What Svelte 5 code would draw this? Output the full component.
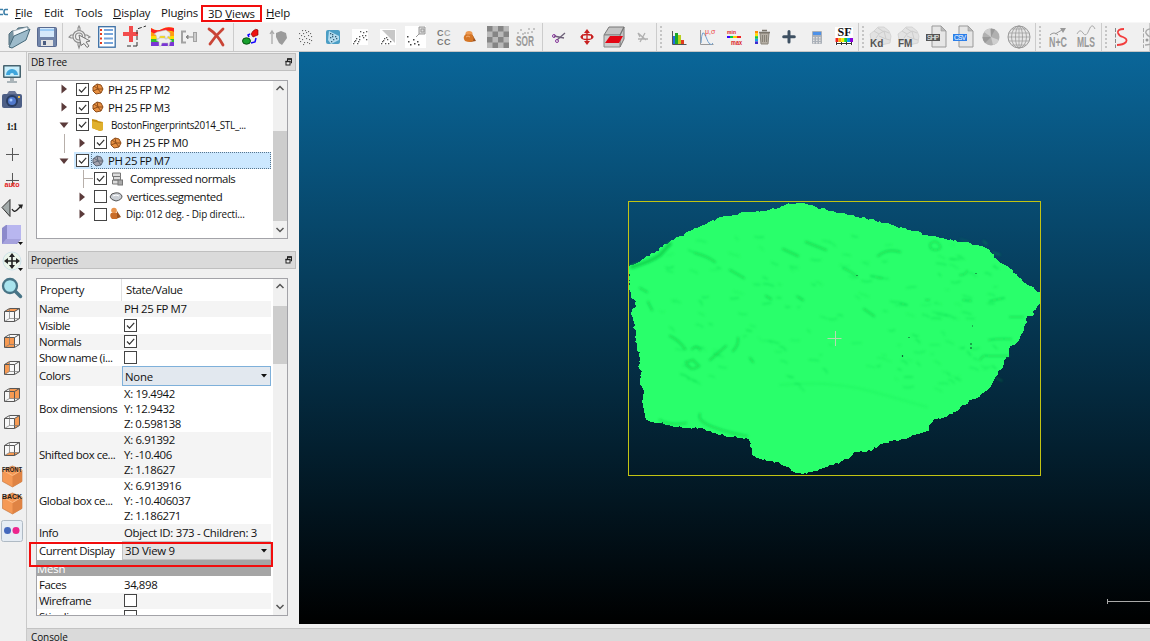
<script>
  const dots = (pts, c = '#666', r = 1.1) =>
    pts.map(([x, y]) => `<rect x="${x}" y="${y}" width="${r}" height="${r}" fill="${c}"/>`).join('');
  const hues = ['#3b2bd0', '#19a0e8', '#18c83a', '#ffe000', '#ff8a00', '#f01818'];
  const T = (s, x, y, size, fill, extra = '') =>
    `<text x="${x}" y="${y}" font-size="${size}" fill="${fill}" ${extra}>${s}</text>`;
  const narrow = (n) => `font-weight="bold" textLength="${n}" lengthAdjust="spacingAndGlyphs"`;
  const cloud = `<path d="M5 17 4 11 8 8 12 4 18 4 23 8 25 13 24 20 15 22Z" fill="#e2e2e2" stroke="#ccc" stroke-width=".7"/><path d="M8 8l5 3 5-3 5 2M13 11l-3 4M18 8l2 8 4 1M12 5l6 4M20 16l-7-3" fill="none" stroke="#cdcdcd"/>`;
  const page = `<path d="M10 3h9l5 5v16H10z" fill="#e6e6e6" stroke="#999"/><path d="M19 3v5h5z" fill="#bbb" stroke="#999" stroke-width=".6"/>`;

  const icons = {
    open: `<path d="M4 22V11l3-3h4l2-3 10-1v5" fill="#7895a4" stroke="#526e7d"/><path d="M8 8l14-4 2 4-15 12z" fill="#f5f8fa" stroke="#8195a1" stroke-width=".6"/><path d="M4 24 9 13l16-7-4 11-14 8z" fill="#9dbbcb" stroke="#456879"/>`,
    save: `<rect x="4.500" y="4.500" width="19" height="19" rx="1" fill="#7185aa" stroke="#58698f"/><rect x="7" y="5" width="14" height="9" fill="#d5e9fb"/><path d="M7 6h14v2H7z" fill="#9ccbf5"/><rect x="8" y="17" width="12" height="6" fill="#e4e4e4"/><rect x="10" y="18" width="3" height="4" fill="#4c5d80"/>`,
    pick: `<g fill="#eee" stroke="#8c8c8c" stroke-width="1.100"><path d="M12 8V5l1-2 1 2v3M12 19v3l1 3 1-3v-3M8 12H5l-2 2 2 1h3M18 12h3l3 2-2 1"/><circle cx="13" cy="13.500" r="6"/><circle cx="13" cy="13.500" r="3.500"/></g><path d="M13 12l11 6-4 1 3 4-2 1.500-3-4-3 2z" fill="#eee" stroke="#777"/>`,
    list: `<rect x="5.700" y="3.700" width="16.500" height="20.500" fill="#fff" stroke="#3a6ea5" stroke-width="1.300"/><path d="M11 7h9M11 11h9M11 15.500h9M11 20h9" stroke="#78a6dc" stroke-width="2"/><path d="M7 7h2M7 11h2M7 15.500h2M7 20h2" stroke="#e33b1e" stroke-width="2"/>`,
    align: `<path d="M11 3v16M3 11h15" stroke="#f24c4c" stroke-width="4"/><path d="M17 23V6l9-3M17 23H5" fill="none" stroke="#333" stroke-dasharray="4 2"/>`,
    sheep: `<path d="M3 8V5q6 4 11 1t12-1v18H3z" fill="#ffdf00"/><path d="M3 5q6 4 11 1t12-1v4q-7-3-12 1T3 9z" fill="#f22"/><path d="M3 9q6 4 11 1t12-1v4H3z" fill="#ff9b13"/><path d="M3 16h23v3H3z" fill="#33bd36"/><path d="M3 19h23v4H3z" fill="#7a35d5"/><path d="M6 11l3-2 9-2 4 3v4l-2-1-1 3h-2v-3h-5l-1 3H9l-1-4zM8 17l3-2h9l4 3-2 1-1 4h-1v-3h-6l-1 3h-2v-4z" fill="#f0f0ee" stroke="#bbb" stroke-width=".5"/>`,
    merge: `<path d="M11 8.500H7v11h4" fill="none" stroke="#a2a2a2" stroke-width="2"/><rect x="18.500" y="9.500" width="3" height="9" fill="#ccc" stroke="#a2a2a2"/><path d="M18 14h-7m0 0 2-2v4z" fill="#888" stroke="#888"/>`,
    cross: `<path d="M7 6Q15 11 21 22M21 6Q13 13 8 21" fill="none" stroke="#ca4537" stroke-width="2.800" stroke-linecap="round"/>`,
    worm: `<path d="M17 8q3-3 5-1v5l-5 2-2-3z" fill="#e11" stroke="#700" stroke-width=".6"/><ellipse cx="10.500" cy="18" rx="4" ry="3.200" fill="#18a02d" stroke="#055311"/><path d="M14 11l-2 1 1 2M15 20l4-1 1-4" fill="none" stroke="#10f" stroke-width="1.500"/>`,
    lift: `<path d="M8 21V9m-2 2 2-3 2 3" fill="none" stroke="#aaa" stroke-width="1.300"/><path d="M12 10l5-2 5 2 1 5-5 7-3-2-3-6z" fill="#9b9b9b"/>`,
    points: dots([[11,7],[14,7],[17,8],[8,10],[12,10],[15,9],[19,10],[10,12],[13,13],[17,12],[20,13],[8,15],[11,16],[15,15],[18,16],[20,17],[9,18],[13,19],[16,19],[18,20],[12,21]]),
    cube: `<rect x="7" y="7" width="14" height="14" rx="2" fill="#4b9ec5"/><path d="M10 8l10 5v4l-8 4-3-4z" fill="#b5dcef"/>${dots([[11,10],[13,11],[16,13],[11,14],[14,16],[17,15],[12,18],[13,13]], '#315c73', 1.3)}`,
    sub1: `<rect x="6" y="6" width="16" height="16" fill="#fff"/>${dots([[7,20],[9,17],[11,20],[10,15],[13,16],[13,13],[16,12],[17,9],[20,8],[19,12],[14,8],[20,16],[8,18],[12,18],[17,14]], '#555', 1.3)}`,
    sub2: `<rect x="6" y="6" width="16" height="16" fill="#fff"/><path d="M8 7h13v13z" fill="#c7c7c7"/>${dots([[7,20],[9,17],[11,20],[10,15],[13,16],[8,18],[14,20],[12,14],[16,18]], '#555', 1.3)}`,
    sub3: `<rect x="4" y="3" width="21" height="22" fill="#fff"/><path d="M15 14l5-5" stroke="#999"/><path d="M18 4h6v7h-6zM20 6h3v3h-3z" fill="#ddd" stroke="#999"/>${dots([[6,13],[7,18],[12,16],[13,20],[16,18],[9,21],[17,21]], '#444', 1.5)}`,
    cccc: T('C',8,13,9,'#777','font-weight="bold"') + T('C',15,13,9,'#aaa','font-weight="bold"') + T('C',8,22,9,'#777','font-weight="bold"') + T('C',15,22,9,'#777','font-weight="bold"'),
    primitive: `<path d="M16 11l4 7-6 1z" fill="#9b511d"/><ellipse cx="13" cy="10.500" rx="3.500" ry="2.500" fill="#ed9b54"/><path d="M10 11q-4 3-1 7 5 2 8 0 2-5-2-7-3 1-5 0z" fill="#d57626"/><path d="M10 14q2-2 4 0" stroke="#f3b077" fill="none"/>`,
    checker: `<path d="M3 3h22v22H3z" fill="#b9b9b9"/>` + [0,1,2,3].flatMap(y => [0,1,2,3].filter(x => (x+y)%2===0).map(x => `<rect x="${3+x*5.5}" y="${3+y*5.5}" width="5.500" height="5.500" fill="#858585"/>`)).join(''),
    sor: T('SOR',5,22.5,14,'#999',narrow(18)) + dots([[6,9],[9,6],[13,9],[17,5],[20,8],[22,5],[11,10],[16,9]], '#c4c4c4', 2),
    scissors: `<path d="M9 13l10 2M12 17l8-7" stroke="#6d6078" stroke-width="1.300"/><circle cx="9" cy="13" r="1.500" fill="none" stroke="#87389b"/><circle cx="12" cy="18" r="1.500" fill="none" stroke="#87389b"/>`,
    move: `<g stroke="#c82020" fill="none" stroke-width="1.300"><path d="M14 9v11"/><ellipse cx="14" cy="14" rx="5.500" ry="2.500"/></g><path d="M14 6l3 4h-6zM14 22l3-4h-6zM7 14l3-3v5zM21 14l-3-3v5z" fill="#c82020"/>`,
    section: `<path d="M4 12l5-8h15l-4 8zM20 12l4-8v12l-4 8z" fill="#c4c4c4" stroke="#777"/><path d="M4 12h16v12H4z" fill="#ccc" stroke="#888"/><path d="M5 20l5-7h13l-4 7z" fill="#e30614"/>`,
    axis: `<path d="M10 10l8 7m-8-7 2 4m0 5 5-9m-7 6h10" fill="none" stroke="#b0b0b0" stroke-width="1.300"/>`,
    hist: `<path d="M7.500 8v13.500h14" fill="none" stroke="#555"/><path d="M8 13h2v8H8z" fill="#216ee5"/><path d="M10 10h3v11h-3z" fill="#1ba829"/><path d="M13 12h3v9h-3z" fill="#b9cf20"/><path d="M16 17h3v4h-3z" fill="#e23c20"/>`,
    stats: `<path d="M7.500 7v14.500h13" fill="none" stroke="#999"/><path d="M8 20Q9 3 13 14t7 6" fill="none" stroke="#73a3d2"/>${T('μ,σ',12,11,7,'#e44')}`,
    minmax: T('min',7,10.500,6,'#dc2424',narrow(9)) + T('max',11,21.500,6.5,'#dc2424',narrow(11)) + `<path d="M7 14h3" stroke="#30f" stroke-width="2"/><path d="M10 14h3" stroke="#0c4" stroke-width="2"/><path d="M13 14h4" stroke="#fc0" stroke-width="2"/><path d="M17 14h4" stroke="#e22" stroke-width="2"/>`,
    trash: hues.slice(0,5).reverse().map((c,i)=>`<rect x="7" y="${8+i*2.6}" width="3" height="2.600" fill="${c}"/>`).join('') + `<path d="M12 10h9l-1 11h-7z" fill="#b4aea4" stroke="#8a857b"/><path d="M11 9.500h11M14 7.500h5" stroke="#7b766d" stroke-width="1.500"/><path d="M14.500 12v7M16.500 12v7M18.500 12v7" stroke="#7b766d" stroke-width=".8"/>`,
    plus: `<path d="M14 8.500v10.500M8.700 13.700h10.600" stroke="#3e5062" stroke-width="3" stroke-linecap="round"/>`,
    calc: `<rect x="9" y="8" width="10" height="13" rx="1" fill="#aab0b8"/><rect x="10" y="9" width="8" height="3" fill="#4d91e8"/>${dots([[10,14],[13,14],[16,14],[10,16.5],[13,16.5],[16,16.5],[10,19],[13,19],[16,19]],'#e2e2e2',1.5)}`,
    sf: `<path d="M5 4h18v18H5z" fill="#fff"/>${T('SF',7.500,13,12,'#111','class="serif" font-weight="bold"')}` + ['#e22','#fa0','#ee0','#2c3','#09f','#80d'].map((c,i)=>`<rect x="${5.5+i*2.9}" y="15" width="3" height="4" fill="${c}"/>`).join('') + `<path d="M6 20.500h16M6.500 19v3M11.500 19v3M16.500 19v3M21.500 19v3" stroke="#333"/>`,
    kd: cloud + T('Kd',4,23.5,10,'#555','font-weight="bold"'),
    fm: cloud + T('FM',4,23.5,10,'#555','font-weight="bold"'),
    shp: page + `<rect x="4" y="11" width="14" height="7" fill="#555"/>${T('SHP',5,17,6.5,'#fff','textLength="12"')}`,
    csv: page + `<rect x="4" y="11" width="14" height="7" fill="#2c7fe9"/>${T('CSV',5,17,6.5,'#fff','textLength="12"')}`,
    disc: `<circle cx="14" cy="14" r="8.500" fill="#b0b0b0"/><path d="M14 14l-7-5a8.500 8.500 0 0 1 6-3.500zM14 14l8 3a8.500 8.500 0 0 1-6 5z" fill="#cfcfcf"/><path d="M14 14l-6 6a8 8 0 0 1-2.500-6zM14 14V5.500l4 1z" fill="#999"/>`,
    globe: `<circle cx="14" cy="14" r="11" fill="#e6e6e6" stroke="#999"/><path d="M3 14h22M4 10h20M4 18h20M7 6h14M7 22h14M14 3v22" stroke="#999" stroke-width=".7"/><g fill="none" stroke="#999" stroke-width=".8"><ellipse cx="14" cy="14" rx="3.500" ry="11"/><ellipse cx="14" cy="14" rx="7.500" ry="11"/></g>`,
    nc: T('N+C',5,23.5,14,'#999',narrow(18)) + `<path d="M6 12q4-4 8 0M11 11l7-4" fill="none" stroke="#999"/><path d="M16 5h6l-3 5z" fill="#999"/>`,
    mls: T('MLS',5,23.5,14,'#999',narrow(18)) + `<path d="M5 11q3-6 6-1t6-3 6-1" fill="none" stroke="#aaa"/>`,
    curve: `<path d="M8.500 5v20" stroke="#888" stroke-dasharray="4 1.500"/><path d="M17 6q-7 0-6 4 1 3 5 4 5 2 3 5-3 3-9 3" fill="none" stroke="#f23d3d" stroke-width="1.800"/>`,
    curve2: `<path d="M8.500 5v20" stroke="#aaa" stroke-dasharray="4 1.500"/><path d="M17 6q-7 0-6 4 1 3 5 4 5 2 3 5-3 3-9 3" fill="none" stroke="#aaa" stroke-width="1.500"/><circle cx="12" cy="17" r="1.500" fill="#999"/>`
  };

  const groups = [
    { cls: 'g1', items: ['open', 'save'] },
    { cls: 'g2', items: ['pick', 'list', 'align', 'sheep', 'merge', 'cross'] },
    { cls: 'g3', items: ['worm', 'lift', 'points', 'cube', 'sub1', 'sub2', 'sub3', 'cccc', 'primitive', 'checker', 'sor'] },
    { cls: 'g4', items: ['scissors', 'move', 'section', 'axis'] },
    { cls: 'g5 grip', items: ['hist', 'stats', 'minmax', 'trash', 'plus', 'calc', 'sf'] },
    { cls: 'g6 grip', items: ['kd', 'fm', 'shp', 'csv', 'disc', 'globe'] },
    { cls: 'g7 grip', items: ['nc', 'mls'] },
    { cls: 'g8 grip', items: ['curve', 'curve2'] }
  ];

  const wire = (face) =>
    `<path d="M5 9.500l4.500-3h10v10.500l-4.500 2.500H5z" fill="#f8f8f8"/>${face}<path d="M4.500 9.500h10v10h-10zM9.500 6.500H19.500v10l-5 3M4.500 9.500l5-3M14.500 9.500l5-3" fill="none" stroke="#555"/><path d="M9.500 7v9.500h10M9.500 16.500l-5 3" fill="none" stroke="#777" stroke-width=".7"/>`;
  const F = (d) => `<path d="${d}" fill="#f79a52"/>`;
  const box = (s) =>
    `<path d="M2.500 7l10-4 9.500 4v11.500l-9.500 5.500-10-5.500z" fill="#f59955" stroke="#bd6f36" stroke-width=".6"/><path d="M12.500 12.500v11.500l9.500-5.500V7z" fill="#df8344"/><path d="M2.500 7l10 5.500L22 7" fill="none" stroke="#ffbc86"/>${T(s,2,9.5,7.500,'#222',narrow(20))}`;
  const side = [
    `<rect x="3" y="5" width="18" height="13" rx="1" fill="#47636f"/><rect x="4.500" y="6.500" width="15" height="10" fill="#c9eefb"/><path d="M6 15a6 6 0 0 1 12 0h-4a2 2 0 0 0-4 0z" fill="#3ea5dc"/><path d="M10 18h4v3h3v2H7v-2h3z" fill="#aab4b9"/>`,
    `<rect x="2" y="8" width="20" height="14" rx="2" fill="#4d5f86"/><path d="M7 8l2-3h6l2 3z" fill="#6b7797"/><circle cx="12" cy="15" r="6" fill="#293c60"/><circle cx="12" cy="15" r="4" fill="#5179cc"/><circle cx="11" cy="14" r="1.500" fill="#a5caff"/><rect x="18" y="10" width="2" height="2" fill="#f3c14c"/>`,
    T('1:1',6.5,17,9.500,'#111','class="serif" font-weight="bold" textLength="11"'),
    `<path d="M12.500 8v13M6 14.500h13" stroke="#555"/>`,
    `<path d="M12.500 6v13M6 13.500h13" stroke="#555"/>${T('auto',4.5,20,7.500,'#e32222',narrow(15))}`,
    `<path d="M2 13.500l8-8v17z" fill="#a2aaaa" stroke="#333"/><path d="M12 15q2 4 5 1t4-4" fill="none" stroke="#222" stroke-width="1.300"/><path d="M18 10.500h5l-1.500 4.500z" fill="#222"/>`,
    `<path d="M2 7l4-3h15v14l-4 5H2z" fill="#8c8acb"/><path d="M7 4h14v14H7z" fill="#b8b6ef"/><path d="M6 18l-4 5h14l5-5z" fill="#a5a2dd"/><path d="M18 21h5l-2.500 3z" fill="#111"/>`,
    `<circle cx="12" cy="13" r="9" fill="#eaf4ea" stroke="#cde0e8"/><path d="M12 7v12M6 13h12" stroke="#222" stroke-width="1.600"/><path d="M12 5l3 4H9zM12 21l3-4H9zM4 13l4-3v6zM20 13l-4-3v6z" fill="#222"/><path d="M18 20h5l-2.500 3z" fill="#111"/>`,
    `<circle cx="10" cy="11" r="7" fill="#a9e4ee" stroke="#487486" stroke-width="2.300"/><path d="M15.500 16.500l5 5" stroke="#487486" stroke-width="3.500" stroke-linecap="round"/>`,
    wire(F('M5 9.500l4.500-3h10l-4.500 3z')),
    wire(F('M5 9.500h10v10H5z')),
    wire(F('M5 9.500l4.500-3v10L5 19.500z')),
    wire(F('M9.500 6.500h10v10h-10z')),
    wire(F('M15 9.500l4.500-3v10l-4.500 3z')),
    wire(F('M5 19.500l4.500-3h10l-4.500 3z')),
    box('FRONT'),
    box('BACK'),
    `<rect x="1.500" y="3.500" width="21" height="21" rx="2" fill="#e6edf4" stroke="#afbac4"/><circle cx="7.500" cy="13.500" r="3.500" fill="#4469bd"/><circle cx="16" cy="13.500" r="3.500" fill="#ec258e"/>`
  ];

  const treeIcons = {
    mesh: `<path d="M2 5l4-3 4 1 2 4-2 4-5 1-3-3z" fill="#e79042" stroke="#8e4d19"/><path d="M6 2l1 5 5 0M7 7l3 4M7 7l-5 2M7 7l-4-3" stroke="#8e4d19" fill="none"/>`,
    meshSel: `<path d="M2 5l4-3 4 1 2 4-2 4-5 1-3-3z" fill="#a5a3ad" stroke="#5d6878"/><path d="M6 2l1 5 5 0M7 7l3 4M7 7l-5 2M7 7l-4-3" stroke="#5d6878" fill="none"/>`,
    folder: `<path d="M1 1l5 1 1 1 5 1v8L9 13 1 10z" fill="#c58d12"/><path d="M1 3l8 2 3-1v8l-3 1-8-3z" fill="#e0b02c"/>`,
    normals: `<path d="M2.500 1h8v3.500h-8zM3.500 4.500h7V8h-7zM2.500 8h6v4h-6z" fill="#ddd" stroke="#777"/><rect x="8" y="8" width="4.500" height="5" fill="#aaa" stroke="#777"/>`,
    vertices: `<path d="M1 7q1-4 5-4 5-1 7 3 0 4-6 5-5-1-6-4z" fill="#c9ced4" stroke="#555"/><path d="M4 6l3-1 3 1" stroke="#fff" fill="none"/>`,
    plane: `<path d="M8 4l4 6-5 2z" fill="#9b511d"/><circle cx="5" cy="3.500" r="2.800" fill="#e8934c"/><path d="M2 6h6v6H3q-3-3-1-6z" fill="#c96d2a"/>`
  };
  const tree = [
    { d: 1, arrow: 'r', on: true, icon: 'mesh', t: 'PH 25 FP M2' },
    { d: 1, arrow: 'r', on: true, icon: 'mesh', t: 'PH 25 FP M3' },
    { d: 1, arrow: 'd', on: true, icon: 'folder', t: 'BostonFingerprints2014_STL_...', small: true },
    { d: 2, arrow: 'r', on: true, icon: 'mesh', t: 'PH 25 FP M0', line: 'v' },
    { d: 1, arrow: 'd', on: true, icon: 'meshSel', t: 'PH 25 FP M7', sel: true },
    { d: 2, arrow: '', on: true, icon: 'normals', t: 'Compressed normals', line: 't' },
    { d: 2, arrow: 'r', on: false, icon: 'vertices', t: 'vertices.segmented' },
    { d: 2, arrow: 'r', on: false, icon: 'plane', t: 'Dip: 012 deg. - Dip directi...', small: true }
  ];
  const props = [
    { k: 'Name', v: ['PH 25 FP M7'], h: 16, alt: true },
    { k: 'Visible', c: true, h: 17 },
    { k: 'Normals', c: true, h: 16, alt: true },
    { k: 'Show name (i...', c: false, h: 16 },
    { k: 'Colors', s: 'None', h: 20, alt: true, hot: true },
    { k: 'Box dimensions', v: ['X: 19.4942', 'Y: 12.9432', 'Z: 0.598138'], h: 46 },
    { k: 'Shifted box ce...', v: ['X: 6.91392', 'Y: -10.406', 'Z: 1.18627'], h: 46, alt: true },
    { k: 'Global box ce...', v: ['X: 6.913916', 'Y: -10.406037', 'Z: 1.186271'], h: 46 },
    { k: 'Info', v: ['Object ID: 373 - Children: 3'], h: 17, alt: true, wide: true },
    { k: 'Current Display', s: '3D View 9', h: 19 },
    { head: 'Mesh', h: 16 },
    { k: 'Faces', v: ['34,898'], h: 17 },
    { k: 'Wireframe', c: false, h: 16, alt: true },
    { k: 'Stippling', c: false, h: 16 }
  ];

  const outline = [[628.7,267.3],[643,259],[670,241.7],[696.7,227.7],[716.7,218.7],[733,215],[753,211.7],[780,207.7],[788,203.3],[801.7,202.5],[815,206.7],[836,212.5],[851.7,215],[870,219.3],[890,224.3],[913,231],[933,236],[963,241.7],[983,246.7],[990,251],[998,260.7],[1010,269],[1026.7,284],[1040.5,294],[1040,302],[1031.7,316],[1026.7,317.3],[1027.3,323],[1020,336.7],[1015,345],[1010,346],[1009,356.7],[1004,360.7],[1003,367],[998,371.7],[991.7,385],[983,393],[975,399],[963,405],[958,410.7],[943,417.7],[933,420.7],[929,425],[929,430.7],[915,435],[900,440],[880,444],[873,450],[853,453],[850,458],[834,464.7],[820,469],[803,474.5],[793,471.7],[780,463.5],[766.7,460.7],[753,455.7],[748.5,439.3],[720,435],[700,427.7],[676.7,427],[646.7,420],[642.7,406.7],[643.5,390],[640,385],[641.7,371.7],[638,366.7],[640.7,360],[636.7,346.7],[634,323],[632,310],[636,307],[636,301],[630.7,297],[629,277]];
  // Small repeatable offsets roughen the scan boundary between the survey points.
  let seed = 7;
  const rnd = () => (seed = (seed * 16807) % 2147483647) / 2147483647;
  const rough = outline.flatMap(([x, y], i) => {
    const [nx, ny] = outline[(i + 1) % outline.length];
    const n = Math.max(1, Math.round(Math.hypot(nx - x, ny - y) / 2.5));
    return Array.from({ length: n }, (_, j) => {
      const a = j ? 2.4 : 0;
      return [x + ((nx - x) * j) / n + (rnd() - 0.5) * a, y + ((ny - y) * j) / n + (rnd() - 0.5) * a];
    });
  }).map((p) => p.map((v) => v.toFixed(1)).join(',')).join(' ');

  const flecks = Array.from({ length: 170 }, () => {
    const x = 660 + rnd() * 340, y = 235 + rnd() * 155, l = 2 + rnd() * 8;
    return { d: `M${x.toFixed(1)} ${y.toFixed(1)}q${(l / 2).toFixed(1)} ${(rnd() * 3 - 1).toFixed(1)} ${l.toFixed(1)} ${(rnd() * 5 - 1).toFixed(1)}`, o: (0.12 + rnd() * 0.3).toFixed(2) };
  });
</script>

{#snippet check(on)}
  <svg class="check" width="13" height="13" viewBox="0 0 13 13">
    <rect x=".5" y=".5" width="12" height="12" fill="#fff" stroke="#444" />
    {#if on}<path d="M3 6.500l2.500 2.700L10.200 3.800" fill="none" stroke="#333" stroke-width="1.200" />{/if}
  </svg>
{/snippet}

{#snippet dockTitle(t)}
  <div class="title"><span>{t}</span>
    <svg width="8" height="8" viewBox="0 0 8 8"><path d="M2.500 3V1h4v4H5.500" fill="none" stroke="#222" /><path d="M2 1h5" stroke="#222" stroke-width="1.500" /><rect x="1" y="3.500" width="4" height="3.500" fill="#eee" stroke="#222" /><path d="M.5 3.500h5" stroke="#222" stroke-width="1.500" /></svg>
  </div>
{/snippet}

{#snippet scroll(cls)}
  <div class="scroll {cls}">
    <svg width="14" height="16" viewBox="0 0 14 16"><path d="M3.500 9 7 5.500 10.500 9" fill="none" stroke="#555" stroke-width="1.500" /></svg>
    <div class="thumb"></div>
    <svg width="14" height="16" viewBox="0 0 14 16"><path d="M3.500 6 7 9.500 10.500 6" fill="none" stroke="#555" stroke-width="1.500" /></svg>
  </div>
{/snippet}

<div class="app">
  <nav class="menu">
    <svg class="logo" width="9" height="10" viewBox="0 0 9 10"><path d="M3 1.500H0M3 6.500H0M8 1.500H5.500Q4 1.500 4 4T5.500 6.500H8" fill="none" stroke="#3d7fa8" stroke-width="1.600" /></svg>
    <span class="m1"><u>F</u>ile</span><span class="m2">Edit</span><span class="m3">Tools</span><span class="m4"><u>D</u>isplay</span><span class="m5">Plugins</span><span class="views">3D <u>V</u>iews</span><span><u>H</u>elp</span>
  </nav>
  <div class="tools">
    {#each groups as g}
      <div class="group {g.cls}">
        {#each g.items as name}
          <svg width="28" height="28" viewBox="0 0 28 28">{@html icons[name]}</svg>
        {/each}
      </div>
    {/each}
  </div>
  <div class="main">
    <aside class="side">
      {#each side as s}<svg width="24" height="26.9" viewBox="0 0 24 26.9">{@html s}</svg>{/each}
    </aside>
    <div class="right">
      <div class="work">
        <div class="docks">
          {@render dockTitle('DB Tree')}
          <div class="panel treebox">
            <div class="tree">
              {#each tree as r}
                <div class="trow d{r.d}" class:sel={r.sel} class:small={r.small}>
                  {#if r.line}<i class="line {r.line}"></i>{/if}
                  <svg class="arrow" width="10" height="10" viewBox="0 0 10 10">
                    {#if r.arrow}<path d={r.arrow === 'r' ? 'M2.500 .5 8 5 2.500 9.500z' : 'M.5 2.500h9L5 8z'} fill="#5b3b3b" />{/if}
                  </svg>
                  <span class="cb">{@render check(r.on)}</span>
                  <span class="label"><svg width="14" height="14" viewBox="0 0 14 14">{@html treeIcons[r.icon]}</svg><span class="t {r.icon}">{r.t}</span></span>
                </div>
              {/each}
            </div>
            {@render scroll('st')}
          </div>
          {@render dockTitle('Properties')}
          <div class="panel propbox">
            <div class="props">
              <div class="prow head"><div class="k">Property</div><div class="v">State/Value</div></div>
              {#each props as p}
                <div class="prow" class:alt={p.alt} class:section={p.head} style:height="{p.h}px">
                  {#if p.head}<div>{p.head}</div>{:else}
                    <div class="k">{p.k}</div>
                    <div class="v" class:combo={p.s} class:hot={p.hot} class:wide={p.wide}>
                      {#if p.s}<span>{p.s}</span><svg width="6" height="4" viewBox="0 0 6 4"><path d="M0 0h6L3 3.500z" fill="#111" /></svg>
                      {:else if p.v}{#each p.v as l}<div>{l}</div>{/each}
                      {:else}{@render check(p.c)}{/if}
                    </div>
                  {/if}
                </div>
              {/each}
            </div>
            {@render scroll('sp')}
          </div>
          <div class="mark"></div>
        </div>
        <svg class="view" width="851" height="572" viewBox="299 52 851 572">
          <defs>
            <linearGradient id="sky" x1="0" y1="0" x2="0" y2="1"><stop offset="0" stop-color="#0a6699" /><stop offset="1" stop-color="#000" /></linearGradient>
            <filter id="soft"><feGaussianBlur stdDeviation="1.1" /></filter>
          </defs>
          <rect x="299" y="52" width="851" height="572" fill="url(#sky)" />
          <polygon points={rough} fill="#29ff6b" shape-rendering="crispEdges" />
          <g fill="none" stroke="#10d44c" stroke-linecap="round" filter="url(#soft)">
            <path d="M632 267q20-6 28-12l10-11" stroke-width="4" opacity=".85" />
            <path d="M695 253q12 3 20 9M730 270l14 8M783 249l15 7M806 242l20 8M766 296l5 3M798 297l5 3M878 256q9-8 22-4M864 309l10 7" stroke-width="2.500" opacity=".6" />
            <path d="M648 302l4 8M640 288l7 4M670 336q9 4 15 13M738 338q1 7-5 13M686 362q4 11 13 4l-6-6zM692 349q5-5 8 1M750 358l3 4M726 346l-16 14" stroke-width="2.500" opacity=".6" />
            <path d="M660 420q10 6 26 3M700 414q-3 7 13 13t34 9" stroke-width="2.500" opacity=".6" />
            <path d="M930 244q5-5 9 0t-3 6q-7 0-6-6" stroke-width="2" opacity=".6" />
            <path d="M843 268q8 3 14 9M871 276l11 2M960 275q6 0 7-4M926 300h3M963 300l8 1M990 301l14-3M989 340q12-2 22-1M980 360q3-6 9-4l19 0M1010 317h13M900 303l7 2" stroke-width="2" opacity=".55" />
            <path d="M780 385q50-5 90 6t57 16" stroke-width="2" opacity=".15" />
            {#each flecks as f}<path d={f.d} opacity={f.o} stroke-width="1.600" />{/each}
          </g>
          <path d="M902.500 355v2M971 343v2M971 347v2M972 326h1M857 275v1M976 273v1M909 337v1" stroke="#0b6b35" stroke-width="1.200" />
          <path d="M827.500 338.500h14M835.500 331v15" stroke="#b5dcae" />
          <rect x="628.5" y="201.5" width="412" height="274" fill="none" stroke="#c2c313" />
          <path d="M1107.500 599v5M1108 601.500h42" stroke="#aaa" />
        </svg>
      </div>
      <div class="console">Console</div>
    </div>
  </div>
</div>

<style>
  :global(body) { margin: 0; overflow: hidden; }
  .app { width: 1150px; height: 641px; display: flex; flex-direction: column; overflow: hidden; background: #f0f0f0; font-family: 'Open Sans', 'Noto Sans', sans-serif; font-size: 11.4px; letter-spacing: -.45px; color: #111; }
  svg { display: block; flex: none; overflow: visible; }
  .menu { height: 22px; background: #fff; display: flex; align-items: center; padding-top: 4px; box-sizing: border-box; white-space: nowrap; letter-spacing: -.15px; line-height: 14px; }
  .menu span { display: block; }
  .menu u { text-underline-offset: 1px; }
  .logo { margin-right: 6px; overflow: hidden; }
  .m1 { width: 29px; } .m2 { width: 31px; } .m3 { width: 38px; } .m4 { width: 48px; } .m5 { width: 40px; }
  .menu .views { width: 61px; height: 17px; box-sizing: border-box; border: 2px solid #f20d0d; padding-left: 5px; margin-right: 4px; line-height: 13px; }
  .tools { height: 30px; flex: none; display: flex; border-top: 1px solid #f7f7f7; border-bottom: 1px solid #c6c6c6; box-sizing: border-box; }
  .group { display: flex; flex: none; position: relative; box-sizing: border-box; height: 28px; border-right: 1px solid #ccc; padding-left: 2px; }
  .group svg { margin-right: -.5px; }
  .g1 { width: 63px; padding-left: 5px; }
  .g2 { width: 171px; padding-left: 3px; }
  .g2 svg { margin-right: -.8px; }
  .g3 { width: 309px; }
  .g4 { width: 114px; }
  .g5 { width: 202px; padding-left: 8px; }
  .g6 { width: 177px; padding-left: 7px; }
  .g6 svg { margin-right: -.2px; }
  .g7 { width: 66px; padding-left: 8px; }
  .g8 { width: 48px; padding-left: 5px; }
  .grip::before { content: ''; position: absolute; left: 3px; top: 3px; height: 22px; border-left: 2px dotted #c5c5c5; }
  .tools :global(text), .side :global(text) { font-family: 'Liberation Sans', sans-serif; letter-spacing: 0; }
  .tools :global(text.serif), .side :global(text.serif) { font-family: 'Liberation Serif', serif; }
  .main { display: flex; flex: 1; min-height: 0; }
  .side { width: 27px; box-sizing: border-box; border-right: 1px solid #c9c9c9; padding-top: 7.5px; flex: none; background: #f0f0f0; }
  .right { flex: 1; display: flex; flex-direction: column; }
  .work { height: 572px; display: flex; }
  .docks { width: 272px; padding: 1px 3px 0 1px; box-sizing: border-box; position: relative; }
  .title { height: 18px; box-sizing: border-box; border: 1px solid #bfbfbf; background: #dadada; display: flex; align-items: center; justify-content: space-between; padding: 0 2px 0 2px; font-size: 10px; letter-spacing: -.15px; }
  .panel { margin-left: 8px; width: 252px; box-sizing: border-box; border: 1px solid #a3a3a8; background: #fff; display: flex; overflow: hidden; }
  .treebox { margin-top: 9px; height: 159px; margin-bottom: 12px; }
  .propbox { margin-top: 9px; height: 338px; }
  .tree { width: 234px; margin-top: -1px; }
  .trow { height: 18px; display: flex; align-items: center; position: relative; padding-left: 22px; white-space: nowrap; }
  .trow.d2 { padding-left: 40px; }
  .tree .trow:nth-child(n+3) { height: 17.9px; }
  .arrow { margin-right: 5px; }
  .cb { padding: 2px; display: block; }
  .label { display: flex; align-items: center; flex: 1; height: 17px; box-sizing: border-box; border: 1px solid transparent; }
  .label svg { margin-left: -1px; margin-right: 3px; }
  .sel .cb { background: #cce8ff; }
  .sel .label { background: #cce8ff; border: 1px dotted #57758d; }
  .t.normals { margin-left: 3px; }
  .small .t { font-size: 9.9px; letter-spacing: -.27px; }
  .small .t.plane { letter-spacing: -.15px; }
  .t.folder { margin-left: 3px; }
  .t.vertices { margin-left: 1px; }
  .label:has(.normals) { padding-left: 1px; }
  .line { position: absolute; border-left: 1px solid #b7afaa; height: 18px; left: 27px; top: 0; }
  .line.t { left: 46px; }
  .line.t::after { content: ''; position: absolute; width: 9px; top: 8px; border-top: 1px solid #b7afaa; }
  .scroll { width: 14px; margin-left: auto; background: #f0f0f0; display: flex; flex-direction: column; }
  .thumb { background: #cdcdcd; margin-bottom: auto; }
  .st .thumb { margin-top: 34px; height: 90px; }
  .sp .thumb { margin-top: 11px; height: 58px; }
  .props { width: 234px; overflow: hidden; }
  .prow { display: flex; box-sizing: border-box; background: #fff; white-space: nowrap; }
  .prow.head { height: 22px; letter-spacing: -.25px; }
  .head .k { padding-left: 3px; border-right: 1px solid #e1e1e1; }
  .head .v { padding-left: 4px; }
  .prow.alt { background: #f4f4f4; }
  .k { width: 85px; box-sizing: border-box; padding: 0 0 1px 2px; display: flex; align-items: center; flex: none; }
  .v { flex: 1; display: flex; flex-direction: column; justify-content: center; align-items: flex-start; padding: 0 0 1px 2px; line-height: 15px; letter-spacing: -.37px; }
  .v.wide { letter-spacing: -.3px; }
  .v.combo { flex-direction: row; align-items: center; justify-content: space-between; border: 1px solid #c4c4c4; background: #e2e2e2; padding: 0 3px 0 2px; letter-spacing: -.25px; }
  .v.hot { border-color: #7eb0da; background: #e2e8ef; }
  .prow.section { background: #a5a5a5; color: #fff; align-items: center; letter-spacing: -.2px; }
  .mark { position: absolute; left: 2px; top: 490px; width: 244px; height: 25px; box-sizing: border-box; border: 2px solid #f20d0d; }
  .console { margin-top: 4px; flex: 1; background: #dadada; border-top: 1px solid #c3c3c3; padding: 1px 4px; font-size: 10px; letter-spacing: -.1px; }
</style>
